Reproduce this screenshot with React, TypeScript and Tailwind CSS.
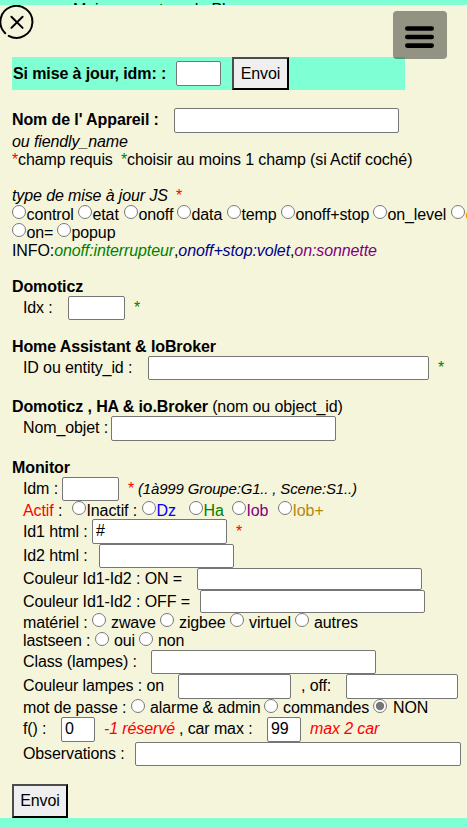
import type { ReactNode } from "react";

type BoxProps = { className?: string; children?: ReactNode };

function Row({ className = "", children }: BoxProps) {
  return <div className={`flex items-start whitespace-pre ${className}`}>{children}</div>;
}

function T({ className = "", children }: BoxProps) {
  return <span className={`block shrink-0 ${className}`}>{children}</span>;
}

function Field({ className, value = "" }: { className: string; value?: string }) {
  return (
    <input
      type="text"
      defaultValue={value}
      className={`block shrink-0 rounded-[2px] border border-[#767676] bg-white px-[3px] pb-[1px] text-base leading-none text-black ${className}`}
    />
  );
}

function Radio({
  name,
  className = "",
  checked = false,
}: {
  name: string;
  className?: string;
  checked?: boolean;
}) {
  return (
    <input
      type="radio"
      name={name}
      defaultChecked={checked}
      className={`block size-[14px] shrink-0 accent-[#767676] ${className}`}
    />
  );
}

function Send({ className = "" }: { className?: string }) {
  return (
    <button
      className={`block shrink-0 border-2 border-t-[#4c4c4c] border-l-[#4c4c4c] border-r-black border-b-black bg-[#efefef] text-center text-base leading-[28px] text-black ${className}`}
    >
      Envoi
    </button>
  );
}

function Opt({ name, label, className }: { name: string; label: string; className: string }) {
  return (
    <label className={`flex shrink-0 items-start ${className}`}>
      <Radio name={name} className="mr-[0.5px]" />
      <span>{label}</span>
    </label>
  );
}

export default function App() {
  return (
    <div className="relative h-[828px] w-[467px] overflow-hidden bg-[#7fffd4] font-['Liberation_Sans',Arial,sans-serif] text-base tracking-[-0.11px] text-black">
      <div className="h-[5px] overflow-hidden whitespace-pre pl-[73px] leading-[18px]">
        <div className="pt-[1px]">Maison montres du Plan</div>
      </div>

      <main className="h-[813px] overflow-hidden bg-[#f5f5dc] pl-3">
        <Row className="mt-[52px] h-[33px] w-[393px] bg-[#7fffd4] pl-[1px] leading-[33px]">
          <T className="w-[163px] font-bold">Si mise à jour, idm: :</T>
          <Field className="mt-1 h-[25px] w-[45px]" />
          <Send className="ml-[11px] h-[33px] w-[57px]" />
        </Row>

        <Row className="mt-[18px] h-[24px] leading-[23px]">
          <T className="w-[162px] font-bold">Nom de l' Appareil :</T>
          <Field className="h-[25px] w-[225px]" />
        </Row>
        <Row className="h-[18px] italic leading-[20px]">ou fiendly_name</Row>
        <Row className="h-[18px] leading-[20px]">
          <T className="w-[6px] text-[red]">*</T>
          <T className="w-[103px]">champ requis</T>
          <T className="w-[6px] text-[green]">*</T>
          <T>choisir au moins 1 champ (si Actif coché)</T>
        </Row>

        <Row className="mt-[18px] h-[19px] leading-[20px]">
          <T className="w-[164px] italic">type de mise à jour JS</T>
          <T className="text-[red]">*</T>
        </Row>
        <Row className="h-[18px] leading-[19px]">
          <Opt name="js" label="control" className="w-[66px]" />
          <Opt name="js" label="etat" className="w-[46px]" />
          <Opt name="js" label="onoff" className="w-[53px]" />
          <Opt name="js" label="data" className="w-[50px]" />
          <Opt name="js" label="temp" className="w-[54px]" />
          <Opt name="js" label="onoff+stop" className="w-[92px]" />
          <Opt name="js" label="on_level" className="w-[78px]" />
          <Opt name="js" label="color" className="w-[60px] text-[#e08000]" />
        </Row>
        <Row className="h-[18px] leading-[19px]">
          <Opt name="js" label="on=" className="w-[45px]" />
          <Opt name="js" label="popup" className="w-[80px]" />
        </Row>
        <Row className="h-[18px] leading-[20px]">
          <T>INFO:</T>
          <T className="italic text-[green]">onoff:interrupteur</T>
          <T>,</T>
          <T className="italic text-[#00008b]">onoff+stop:volet</T>
          <T>,</T>
          <T className="italic text-[purple]">on:sonnette</T>
        </Row>

        <Row className="mt-[18px] h-[19px] font-bold leading-[20px]">Domoticz</Row>
        <Row className="h-[24px] pl-[11px] leading-[23px]">
          <T className="w-[45px]">Idx :</T>
          <Field className="h-[24px] w-[57px]" />
          <T className="ml-[9px] text-[green]">*</T>
        </Row>

        <Row className="mt-[17px] h-[19px] font-bold leading-[20px]">{"Home Assistant & IoBroker"}</Row>
        <Row className="h-[24px] pl-[11px] leading-[23px]">
          <T className="w-[125px]">ID ou entity_id :</T>
          <Field className="h-[24px] w-[281px]" />
          <T className="ml-[9px] text-[green]">*</T>
        </Row>

        <Row className="mt-[17px] h-[19px] leading-[20px]">
          <T className="font-bold">{"Domoticz , HA & io.Broker "}</T>
          <T>(nom ou object_id)</T>
        </Row>
        <Row className="h-[25px] pl-[11px] leading-[23px]">
          <T className="w-[88px]">Nom_objet :</T>
          <Field className="h-[25px] w-[225px]" />
        </Row>

        <Row className="mt-[17px] h-[19px] font-bold leading-[20px]">Monitor</Row>
        <div className="pl-[11px]">
          <Row className="h-[24px] leading-[23px]">
            <T className="w-[39px]">Idm :</T>
            <Field className="h-[24px] w-[57px]" />
            <T className="ml-[9px] w-[10px] text-[red]">*</T>
            <T className="text-[15px] tracking-[-0.17px] italic">(1à999 Groupe:G1.. , Scene:S1..)</T>
          </Row>
          <Row className="h-[18px] leading-[19px]">
            <T className="w-[49px]">
              <span className="text-[red]">Actif</span> :
            </T>
            <Opt name="etat" label="Inactif :" className="w-[70px]" />
            <Opt name="etat" label="Dz" className="w-[47px] text-[blue]" />
            <Opt name="etat" label="Ha" className="w-[43px] text-[green]" />
            <Opt name="etat" label="Iob" className="w-[46px] text-[purple]" />
            <Opt name="etat" label="Iob+" className="w-[60px] text-[#b8860b]" />
          </Row>
          <Row className="h-[25px] leading-[25px]">
            <T className="w-[69px]">Id1 html :</T>
            <Field className="h-[25px] w-[135px]" value="#" />
            <T className="ml-[9px] text-[red]">*</T>
          </Row>
          <Row className="h-[24px] leading-[23px]">
            <T className="w-[76px]">Id2 html :</T>
            <Field className="h-[24px] w-[135px]" />
          </Row>
          <Row className="h-[22px] leading-[22px]">
            <T className="w-[174px]">Couleur Id1-Id2 : ON =</T>
            <Field className="h-[22px] w-[225px]" />
          </Row>
          <Row className="h-[23px] leading-[23px]">
            <T className="w-[177px]">Couleur Id1-Id2 : OFF =</T>
            <Field className="h-[23px] w-[225px]" />
          </Row>
          <Row className="h-[18px] leading-[19px]">
            <T className="w-[69px]">matériel :</T>
            <Radio name="mat" className="mr-[5px]" />
            <T className="w-[49px]">zwave</T>
            <Radio name="mat" className="mr-[5px]" />
            <T className="w-[51px]">zigbee</T>
            <Radio name="mat" className="mr-[5px]" />
            <T className="w-[46px]">virtuel</T>
            <Radio name="mat" className="mr-[5px]" />
            <T>autres</T>
          </Row>
          <Row className="h-[19px] leading-[19px]">
            <T className="w-[72px]">lastseen :</T>
            <Radio name="seen" className="mt-[1px] mr-[5px]" />
            <T className="w-[25px]">oui</T>
            <Radio name="seen" className="mt-[1px] mr-[5px]" />
            <T>non</T>
          </Row>
          <Row className="h-[24px] leading-[23px]">
            <T className="w-[128px]">Class (lampes) :</T>
            <Field className="h-[24px] w-[225px]" />
          </Row>
          <Row className="h-[25px] leading-[24px]">
            <T className="w-[155px]">Couleur lampes : on</T>
            <Field className="h-[25px] w-[113px]" />
            <T className="w-[55px] pl-[10px]">, off:</T>
            <Field className="h-[25px] w-[112px]" />
          </Row>
          <Row className="h-[18px] leading-[18px]">
            <T className="w-[108px]">mot de passe :</T>
            <Radio name="mdp" className="mr-[5px]" />
            <T className="w-[114px]">{"alarme & admin"}</T>
            <Radio name="mdp" className="mr-[5px]" />
            <T className="w-[90px]">commandes</T>
            <Radio name="mdp" className="mr-[6px]" checked />
            <T>NON</T>
          </Row>
          <Row className="h-[25px] leading-[23px]">
            <T className="w-[38px]">f() :</T>
            <Field className="h-[25px] w-[34px]" value="0" />
            <T className="ml-[9px] w-[75px] italic text-[red]">-1 réservé</T>
            <T className="w-[88px]">, car max :</T>
            <Field className="h-[25px] w-[34px]" value="99" />
            <T className="ml-[9px] italic text-[red]">max 2 car</T>
          </Row>
          <Row className="h-[24px] leading-[23px]">
            <T className="w-[112px]">Observations :</T>
            <Field className="h-[24px] w-[326px]" />
          </Row>
        </div>
        <Send className="mt-[18px] h-[34px] w-[56px]" />
      </main>

      <svg className="absolute top-[5px] left-0" width="35" height="35" viewBox="0 0 35 35" fill="none" stroke="black" strokeWidth="2" strokeLinecap="round">
        <path d="M9.2 30.9A16 16 0 1 0 5.7 28.3" transform="translate(-0.5 0)" />
        <path d="M11.4 11.7l11.2 11.2M22.6 11.7L11.4 22.9" />
      </svg>
      <div className="absolute top-[11px] left-[393px] h-[48px] w-[54px] rounded-[4px] bg-black/40">
        <svg width="54" height="48" viewBox="0 0 54 48" stroke="black" strokeWidth="4.6" strokeLinecap="round">
          <path d="M14.3 17.5h24.4M14.3 26h24.4M14.3 34.6h24.4" />
        </svg>
      </div>
    </div>
  );
}
